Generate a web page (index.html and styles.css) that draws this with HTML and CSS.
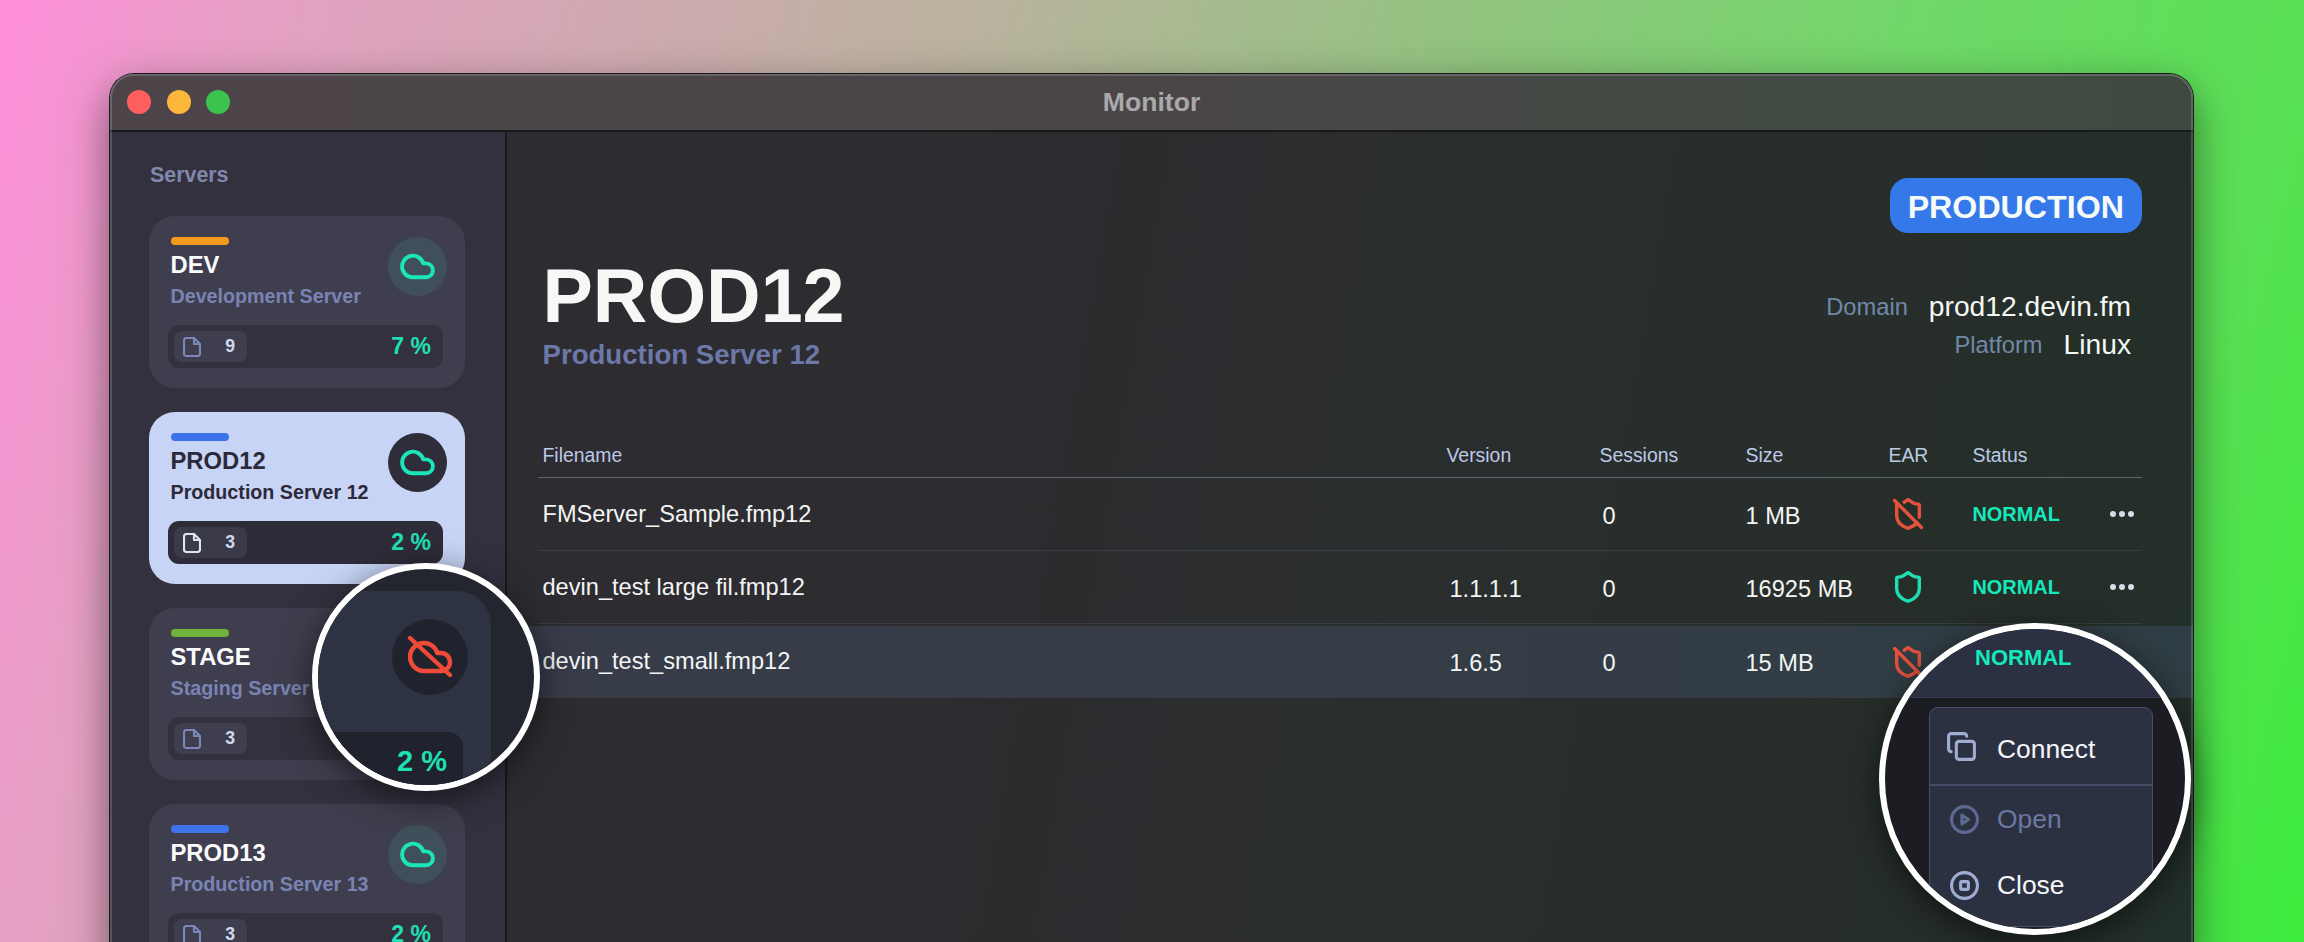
FILE: index.html
```html
<!DOCTYPE html>
<html lang="en">
<head>
<meta charset="utf-8">
<title>Monitor</title>
<link rel="stylesheet" href="styles.css">
</head>
<body>
<svg class="defs" width="0" height="0" aria-hidden="true">
  <symbol id="cloud" viewBox="0 0 24 24"><path d="M17.5 19H9a7 7 0 1 1 6.71-9h1.79a4.5 4.5 0 1 1 0 9Z"/></symbol>
  <symbol id="file" viewBox="0 0 18 20"><path d="M3.500 1H11l6 6v9.500a2.500 2.500 0 0 1-2.500 2.500h-11A2.500 2.500 0 0 1 1 16.500v-13A2.500 2.500 0 0 1 3.500 1Z"/><path d="M11 1v6h6"/></symbol>
  <symbol id="shield" viewBox="0 0 24 24"><path d="M20 13c0 5-3.500 7.500-7.660 8.950a1 1 0 0 1-.67-.01C7.500 20.500 4 18 4 13V6a1 1 0 0 1 1-1c2 0 4.500-1.200 6.240-2.720a1.170 1.170 0 0 1 1.520 0C14.510 3.810 17 5 19 5a1 1 0 0 1 1 1z"/></symbol>
  <symbol id="shield-off" viewBox="0 0 24 24"><path d="m2.500 2.500 19 19"/><path d="M5 5a1 1 0 0 0-1 1v7c0 5 3.500 7.500 7.670 8.940a1 1 0 0 0 .67.01c2.350-.82 4.480-1.970 5.900-3.710"/><path d="M9.309 3.652A12.252 12.252 0 0 0 11.240 2.280a1.170 1.170 0 0 1 1.520 0C14.510 3.810 17 5 19 5a1 1 0 0 1 1 1v7a9.784 9.784 0 0 1-.08 1.264"/></symbol>
</svg>

<div class="window">
  <header class="titlebar">
    <div class="lights">
      <span class="light light-red"></span>
      <span class="light light-yellow"></span>
      <span class="light light-green"></span>
    </div>
    <div class="window-title">Monitor</div>
    <div></div>
  </header>

  <div class="body">
    <aside class="sidebar">
      <h2 class="sidebar-title">Servers</h2>
      <div class="cards">
        <article class="card">
          <div class="card-head">
            <div class="card-text">
              <span class="tag tag-orange"></span>
              <div class="card-name">DEV</div>
              <div class="card-desc">Development Server</div>
            </div>
            <span class="cloud-badge"><svg class="cloud-icon"><use href="#cloud"/></svg></span>
          </div>
          <div class="stat">
            <span class="chip"><svg class="file-icon"><use href="#file"/></svg><span class="chip-count">9</span></span>
            <span class="pct">7 %</span>
          </div>
        </article>

        <article class="card card-active">
          <div class="card-head">
            <div class="card-text">
              <span class="tag tag-blue"></span>
              <div class="card-name">PROD12</div>
              <div class="card-desc">Production Server 12</div>
            </div>
            <span class="cloud-badge"><svg class="cloud-icon"><use href="#cloud"/></svg></span>
          </div>
          <div class="stat">
            <span class="chip"><svg class="file-icon"><use href="#file"/></svg><span class="chip-count">3</span></span>
            <span class="pct">2 %</span>
          </div>
        </article>

        <article class="card">
          <div class="card-head">
            <div class="card-text">
              <span class="tag tag-green"></span>
              <div class="card-name">STAGE</div>
              <div class="card-desc">Staging Server</div>
            </div>
          </div>
          <div class="stat">
            <span class="chip"><svg class="file-icon"><use href="#file"/></svg><span class="chip-count">3</span></span>
          </div>
        </article>

        <article class="card">
          <div class="card-head">
            <div class="card-text">
              <span class="tag tag-blue"></span>
              <div class="card-name">PROD13</div>
              <div class="card-desc">Production Server 13</div>
            </div>
            <span class="cloud-badge"><svg class="cloud-icon"><use href="#cloud"/></svg></span>
          </div>
          <div class="stat">
            <span class="chip"><svg class="file-icon"><use href="#file"/></svg><span class="chip-count">3</span></span>
            <span class="pct">2 %</span>
          </div>
        </article>
      </div>
    </aside>

    <main class="main">
      <div class="badge">PRODUCTION</div>
      <div class="server-head">
        <div>
          <h1 class="server-name">PROD12</h1>
          <div class="server-desc">Production Server 12</div>
        </div>
        <dl class="server-info">
          <div class="info-line"><dt>Domain</dt><dd>prod12.devin.fm</dd></div>
          <div class="info-line"><dt>Platform</dt><dd>Linux</dd></div>
        </dl>
      </div>

      <div class="table">
        <div class="grid-row table-head">
          <span>Filename</span><span>Version</span><span>Sessions</span><span>Size</span><span>EAR</span><span>Status</span><span></span>
        </div>
        <div class="grid-row row">
          <span>FMServer_Sample.fmp12</span>
          <span class="num"></span>
          <span class="num">0</span>
          <span class="size">1 MB</span>
          <svg class="ear ear-off"><use href="#shield-off"/></svg>
          <span class="status">NORMAL</span>
          <span class="dots"><i></i><i></i><i></i></span>
        </div>
        <div class="grid-row row">
          <span>devin_test large fil.fmp12</span>
          <span class="num">1.1.1.1</span>
          <span class="num">0</span>
          <span class="size">16925 MB</span>
          <svg class="ear ear-on"><use href="#shield"/></svg>
          <span class="status">NORMAL</span>
          <span class="dots"><i></i><i></i><i></i></span>
        </div>
        <div class="grid-row row row-hover">
          <span>devin_test_small.fmp12</span>
          <span class="num">1.6.5</span>
          <span class="num">0</span>
          <span class="size">15 MB</span>
          <svg class="ear ear-off"><use href="#shield-off"/></svg>
        </div>
      </div>
    </main>
  </div>
  <div class="window-edge"></div>
</div>

<div class="lens lens-cloud">
  <div class="lens-card">
    <span class="lens-badge">
      <svg class="lens-cloud-off" viewBox="0 0 24 24"><path d="M17.500 19H9a7 7 0 1 1 6.710-9h1.790a4.500 4.500 0 1 1 0 9Z"/><path d="m2 2.500 20 18.500"/></svg>
    </span>
    <div class="lens-stat"><span class="lens-pct">2 %</span></div>
  </div>
</div>

<div class="lens lens-menu">
  <div class="lens-row"><span class="lens-status">NORMAL</span></div>
  <div class="menu">
    <div class="menu-item menu-item-first">
      <svg class="menu-icon menu-icon-copy" viewBox="0 0 24 24"><rect x="8" y="8" width="14" height="14" rx="2"/><path d="M4 16c-1.100 0-2-.9-2-2V4c0-1.100.9-2 2-2h10c1.100 0 2 .9 2 2"/></svg>
      <span>Connect</span>
    </div>
    <div class="menu-item menu-item-off">
      <svg class="menu-icon" viewBox="0 0 24 24"><circle cx="12" cy="12" r="10"/><path d="M10 8.500v7l5-3.500Z"/></svg>
      <span>Open</span>
    </div>
    <div class="menu-item">
      <svg class="menu-icon" viewBox="0 0 24 24"><circle cx="12" cy="12" r="10"/><rect x="9" y="9" width="6" height="6" rx="1"/></svg>
      <span>Close</span>
    </div>
  </div>
</div>
</body>
</html>
```
FILE: styles.css
```css
* { box-sizing: border-box; }

html, body { margin: 0; height: 942px; overflow: hidden; }

body {
  position: relative;
  padding: 74px 111px 0 110px;
  font-family: "Liberation Sans", Arial, sans-serif;
  color: #f4f5f6;
  background: linear-gradient(105deg, #ff8edb 0%, #e6a0c4 10%, #b9b39d 39%, #8fc47d 59%, #72d66a 74%, #5ae055 90%, #3cec3c 100%);
}

.defs { position: absolute; }

.window {
  position: relative;
  height: 868px;
  display: flex;
  flex-direction: column;
  border-radius: 24px 24px 0 0;
  overflow: hidden;
}

body::before {
  content: "";
  position: absolute;
  left: 110px;
  top: 74px;
  width: 2083px;
  height: 900px;
  border-radius: 24px;
  box-shadow: 0 0 0 1px #1b1b1d, 0 16px 44px rgba(0, 0, 0, .5);
}

.window-edge {
  position: absolute;
  inset: 0 0 -30px 0;
  border: 2px solid rgba(255, 255, 255, .17);
  border-radius: 24px;
  pointer-events: none;
}

/* title bar */
.titlebar {
  flex: none;
  height: 58px;
  display: grid;
  grid-template-columns: 1fr auto 1fr;
  align-items: center;
  padding: 0 17px;
  background: linear-gradient(90deg, #4c4449 0%, #4a4547 50%, #414a42 80%, #3e4a3f 100%);
  border-bottom: 2px solid #18191a;
}

.lights { display: flex; gap: 15.5px; }

.light { width: 24px; height: 24px; border-radius: 50%; }
.light-red { background: #fd5e5e; }
.light-yellow { background: #fcb639; }
.light-green { background: #3bc24f; }

.window-title {
  font-size: 26.6px;
  font-weight: 700;
  color: #a9a9a9;
}

/* layout */
.body { flex: 1; display: flex; min-height: 0; }

.sidebar {
  flex: none;
  width: 397px;
  padding: 30px 0 0 39px;
  background: #33313e;
  border-right: 2px solid #19191c;
}

.sidebar-title {
  margin: 0 0 28px 1px;
  font-size: 21.4px;
  line-height: 26px;
  font-weight: 700;
  color: #8188ad;
}

.cards { display: flex; flex-direction: column; gap: 24px; }

/* server cards */
.card {
  flex: none;
  width: 316px;
  height: 172px;
  padding: 21px 22px 0 21.5px;
  border-radius: 26px;
  background: #3e3e4e;
}

.card-head { display: flex; justify-content: space-between; height: 71px; }

.tag { display: block; width: 58px; height: 8px; border-radius: 4px; }
.tag-orange { background: #f59a1c; }
.tag-blue { background: #3d73ea; }
.tag-green { background: #6fb23c; }

.card-name {
  margin-top: 6px;
  font-size: 23.8px;
  line-height: 28px;
  font-weight: 700;
  color: #fbfafc;
}

.card-desc {
  margin-top: 5px;
  font-size: 19.7px;
  line-height: 24px;
  font-weight: 700;
  color: #7a84b4;
  white-space: nowrap;
}

.cloud-badge {
  flex: none;
  width: 59px;
  height: 59px;
  margin-right: -4px;
  display: flex;
  align-items: center;
  justify-content: center;
  border-radius: 50%;
  background: #40505a;
}

.cloud-icon {
  width: 37px;
  height: 37px;
  fill: none;
  stroke: #1be6ba;
  stroke-width: 2.5;
  stroke-linecap: round;
  stroke-linejoin: round;
}

.stat {
  height: 43px;
  margin: 17px 0 0 -2.5px;
  padding: 0 12px 0 6px;
  display: flex;
  align-items: center;
  justify-content: space-between;
  border-radius: 11px;
  background: #33313d;
}

.chip {
  width: 73px;
  height: 31px;
  padding: 0 9px 0 9px;
  display: flex;
  align-items: center;
  justify-content: space-between;
  border-radius: 8px;
  background: #3e3e4e;
}

.file-icon {
  width: 18px;
  height: 20px;
  fill: none;
  stroke: #7a88b8;
  stroke-width: 2.2;
  stroke-linejoin: round;
}

.chip-count {
  margin-right: 3px;
  font-size: 17.6px;
  font-weight: 700;
  color: #d3d8ee;
}

.pct {
  font-size: 23px;
  font-weight: 700;
  color: #1fe0b5;
}

.card-active { background: #c8d4f6; }
.card-active .card-name,
.card-active .card-desc { color: #2c2a38; }
.card-active .cloud-badge { background: #2f2d3a; }
.card-active .stat { background: #2f2c39; }
.card-active .chip { background: #3b3a48; }
.card-active .file-icon { stroke: #dfe4f5; }

/* main panel */
.main {
  flex: 1;
  min-width: 0;
  padding: 46px 51px 0 31px;
  display: flex;
  flex-direction: column;
  background: linear-gradient(100deg, #2e2c31 0%, #2c2c2f 35%, #292e2d 65%, #262e29 85%, #23302a 100%);
}

.badge {
  align-self: flex-end;
  height: 55px;
  padding: 0 18px;
  border-radius: 18px;
  background: #3478ea;
  font-size: 32.2px;
  line-height: 58px;
  font-weight: 700;
  color: #f4fbf8;
}

.server-head {
  margin-top: 20px;
  padding-left: 4.5px;
  display: flex;
  justify-content: space-between;
}

.server-name {
  margin: 0;
  padding-top: 3px;
  height: 80px;
  font-size: 75.5px;
  line-height: 80px;
  font-weight: 700;
  color: #f8f7f6;
}

.server-desc {
  margin-top: 5px;
  font-size: 27.6px;
  line-height: 34px;
  font-weight: 700;
  color: #6b78a8;
}

.server-info { margin: 34px 11px 0 0; }

.info-line {
  height: 38px;
  display: flex;
  justify-content: flex-end;
  align-items: center;
  gap: 21px;
}

.info-line dt { font-size: 23.7px; color: #7189a8; padding-top: 2px; }
.info-line dd { margin: 0; font-size: 28.2px; color: #f4f8f4; }

/* table */
.table { margin-top: 70px; }

.grid-row {
  display: grid;
  grid-template-columns: 904px 153px 146px 143px 84px 137px 32px;
  padding-left: 4.5px;
}

.table-head {
  height: 36px;
  padding-top: 1px;
  border-bottom: 1px solid #5b6574;
  font-size: 19.4px;
  line-height: 24px;
  color: #bcc9e6;
}

.table-head span { display: block; }

.row {
  height: 73px;
  align-items: center;
  border-bottom: 1px solid #3a3d41;
  font-size: 23.6px;
  color: #f3f5f4;
}

.row-hover {
  height: 74px;
  margin: 0 -51px 0 -31px;
  padding-left: 35.5px;
  border-top: 2px solid transparent;
  background: linear-gradient(90deg, #383c4a 0%, #343c46 60%, #2f3e44 100%) padding-box;
}

.num { padding: 4px 0 0 3px; }
.size { padding: 4px 0 0 0; }

.ear {
  width: 34px;
  height: 34px;
  margin-left: 2.5px;
  fill: none;
  stroke-width: 2.4;
  stroke-linecap: round;
  stroke-linejoin: round;
}
.ear-off { stroke: #e5533c; }
.ear-on { stroke: #1fe0b5; }

.status {
  font-size: 19.9px;
  font-weight: 700;
  color: #14e8bd;
}

.dots { display: flex; gap: 3px; }
.dots i { width: 6px; height: 6px; border-radius: 50%; background: #d5dde8; }

/* magnifier lenses */
.lens {
  position: absolute;
  overflow: hidden;
  border: 6px solid #fff;
  border-radius: 50%;
  box-shadow: 0 8px 34px rgba(0, 0, 0, .55);
}

.lens-cloud {
  left: 312px;
  top: 563px;
  width: 228px;
  height: 228px;
  padding-top: 22px;
  background: #23252f;
}

.lens-card {
  width: 213px;
  height: 240px;
  margin-left: -40px;
  padding: 28px 23px 0 0;
  display: flex;
  flex-direction: column;
  align-items: flex-end;
  border-radius: 34px;
  background: #2d3342;
}

.lens-badge {
  width: 76px;
  height: 76px;
  display: flex;
  align-items: center;
  justify-content: center;
  border-radius: 50%;
  background: #20232e;
}

.lens-cloud-off {
  width: 48px;
  height: 48px;
  fill: none;
  stroke: #f04a38;
  stroke-width: 2.2;
  stroke-linecap: round;
  stroke-linejoin: round;
}

.lens-stat {
  width: 190px;
  height: 70px;
  margin: 37px 5px 0 0;
  padding: 13px 16px 0 0;
  text-align: right;
  border-radius: 15px;
  background: #20222d;
}

.lens-pct {
  font-size: 29px;
  line-height: 32px;
  font-weight: 700;
  color: #1fe0b5;
}

.lens-menu {
  left: 1879px;
  top: 623px;
  width: 312px;
  height: 312px;
  background: #1c1d22;
}

.lens-row {
  height: 69px;
  padding: 0 0 11px 90px;
  display: flex;
  align-items: center;
  background: #2b3142;
  border-bottom: 1px solid #353c4d;
}

.lens-status {
  font-size: 22px;
  font-weight: 700;
  color: #14e8bd;
}

.menu {
  width: 224px;
  height: 220px;
  margin: 9px 0 0 44px;
  border: 1px solid #465069;
  border-radius: 9px;
  background: #2c3142;
  font-size: 26.4px;
  color: #f4f6fa;
}

.menu-item {
  height: 65px;
  display: flex;
  align-items: center;
  gap: 17.5px;
  padding-left: 18.5px;
}

.menu-item-first {
  height: 78px;
  padding-top: 6px;
  border-bottom: 2px solid #434d66;
}

.menu-item-off {
  height: 67px;
  color: #6b78a3;
}

.menu-icon {
  flex: none;
  width: 31px;
  height: 31px;
  fill: none;
  stroke: #9fadd2;
  stroke-width: 2.4;
  stroke-linecap: round;
  stroke-linejoin: round;
}

.menu-item-off .menu-icon { stroke: #5c6a92; }

.menu-icon-copy { margin: -6px 2.500px 0 -2.500px; }
```
